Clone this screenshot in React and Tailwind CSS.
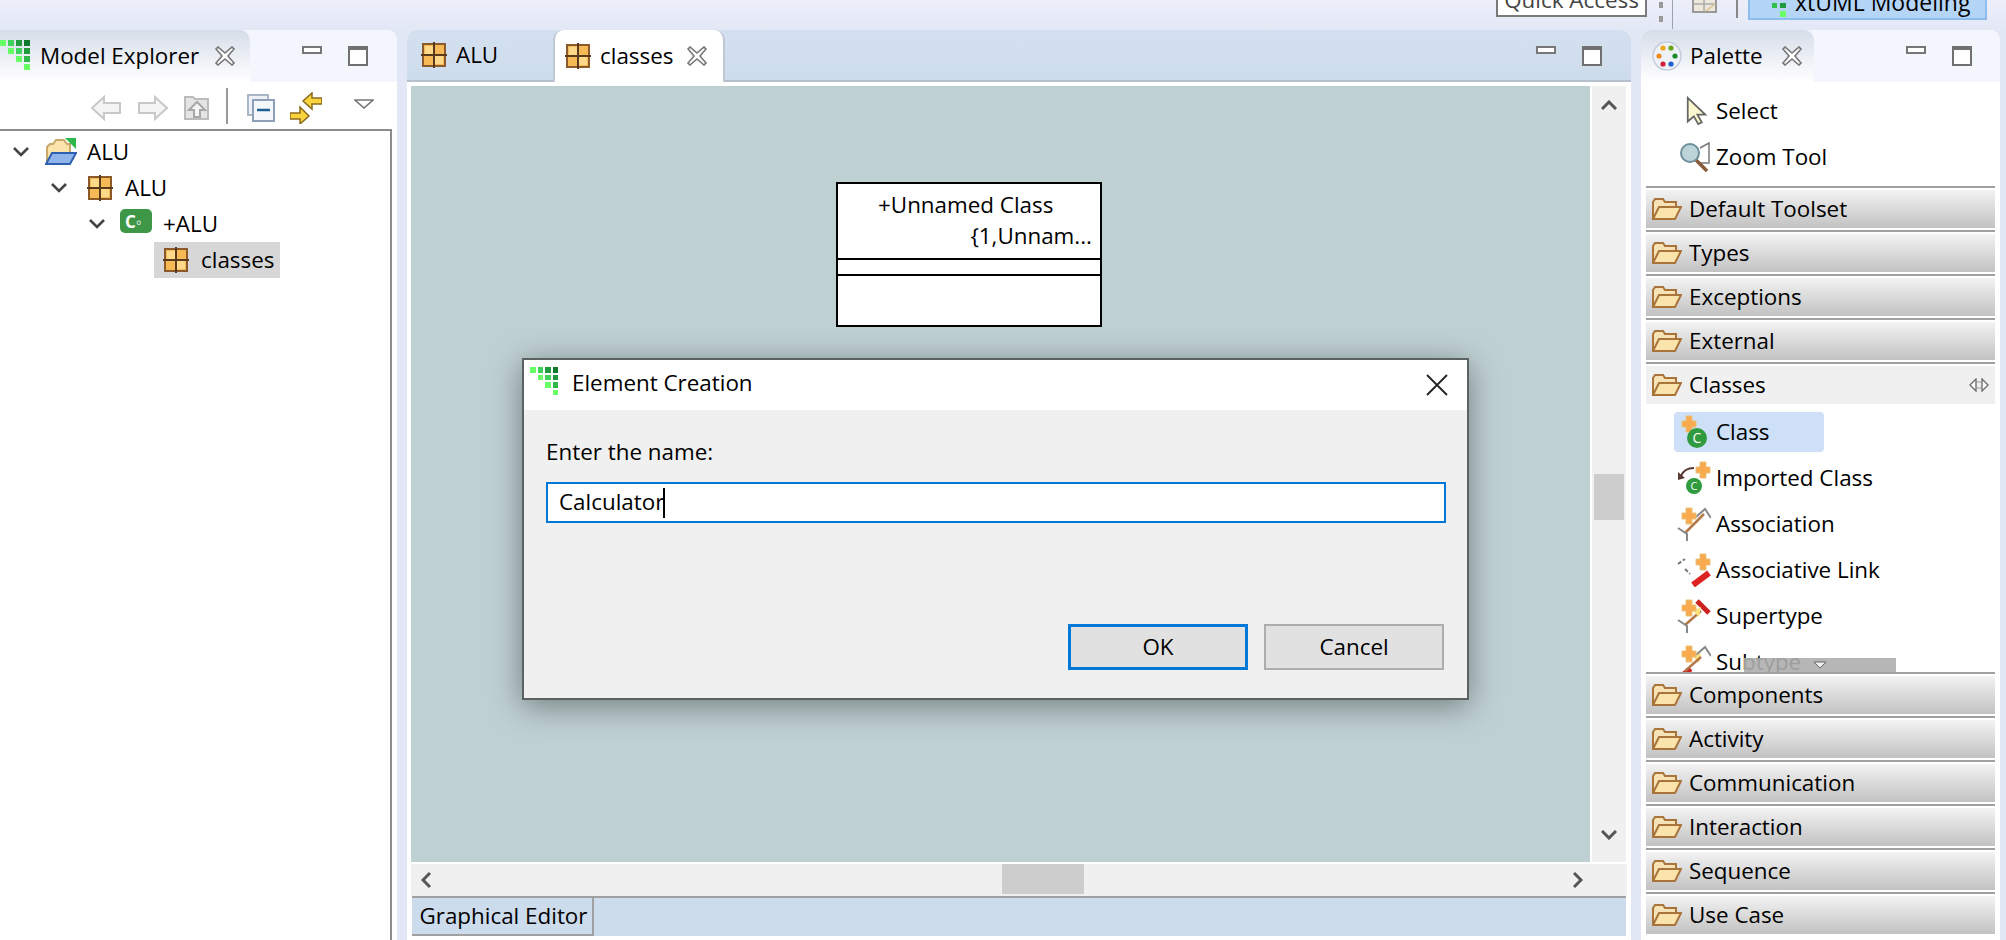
import React from "react";

const Logo = ({ className }) => (
  <svg viewBox="0 0 32 32" className={className} shapeRendering="crispEdges">
    <rect x="0" y="0" width="6" height="6" fill="#66ff66" />
    <rect x="8" y="0" width="6" height="6" fill="#3ed25a" />
    <rect x="16" y="0" width="6" height="6" fill="#1f9a3c" />
    <rect x="24" y="0" width="6" height="6" fill="#0e7a2c" />
    <rect x="8" y="8" width="6" height="6" fill="#66ff66" />
    <rect x="16" y="8" width="6" height="6" fill="#3ed25a" />
    <rect x="24" y="8" width="6" height="6" fill="#1f9a3c" />
    <rect x="16" y="16" width="6" height="6" fill="#66ff66" />
    <rect x="24" y="16" width="6" height="6" fill="#2fb84a" />
    <rect x="24" y="24" width="6" height="6" fill="#66ff66" />
  </svg>
);

const PackageIcon = () => (
  <svg viewBox="0 0 26 26" className="w-[26px] h-[26px] shrink-0">
    <rect x="2" y="2" width="22" height="22" fill="#f7b955" stroke="#8a5a2a" strokeWidth="2" />
    <rect x="4" y="4" width="8" height="8" fill="#ffd98a" />
    <rect x="14" y="14" width="8" height="8" fill="#ffd98a" />
    <path d="M13 0v26M0 13h26" stroke="#5a3a1c" strokeWidth="2" />
  </svg>
);

const CloseIcon = ({ className = "" }) => (
  <svg viewBox="0 0 20 20" className={"w-5 h-5 shrink-0 " + className}>
    <path d="M1 3l2-2 7 6 7-6 2 2-6 7 6 7-2 2-7-6-7 6-2-2 6-7z" fill="#fff" stroke="#777" strokeWidth="1.6" />
  </svg>
);

const MinIcon = () => <div className="w-5 h-[8px] border-2 border-[#777] bg-white" />;
const MaxIcon = () => (
  <div className="w-5 h-5 border-2 border-[#707070] bg-white">
    <div className="h-[2px] bg-[#707070]" />
  </div>
);

const Chevron = () => (
  <svg viewBox="0 0 18 12" className="w-[18px] h-3 shrink-0">
    <path d="M2 2l7 7 7-7" fill="none" stroke="#444" strokeWidth="2.6" />
  </svg>
);

const Folder = () => (
  <svg viewBox="0 0 30 24" className="w-[30px] h-6 shrink-0">
    <path d="M1 22V5l2-3h8l2 3h11v5" fill="#f6e2b4" stroke="#a8743a" strokeWidth="2" />
    <path d="M1 22l6-12h22l-6 12z" fill="#fbe3ac" stroke="#a8743a" strokeWidth="2" />
  </svg>
);

const ProjectFolder = () => (
  <svg viewBox="0 0 32 28" className="w-8 h-7 shrink-0">
    <path d="M2 26V9l3-3h3l3-4h8l3 4h3v8" fill="#fbe3ac" stroke="#c9a86a" strokeWidth="2" />
    <path d="M1 26l6-11h24l-6 11z" fill="#8fb4ea" stroke="#2f5fb0" strokeWidth="2" />
    <path d="M20 0h11v11z" fill="#2fb84a" />
  </svg>
);

const Drawer = ({ name, open }) => (
  <div className="h-11 pt-[2px] pb-[2px] border-t-2 border-[#a0a0a0]">
    <div
      className={
        "h-[38px] flex items-center pl-[6px] gap-[7px] " +
        (open ? "bg-[#f0f0f0]" : "bg-gradient-to-b from-[#f3f3f3] to-[#c2c2c2]")
      }
    >
      <Folder />
      <span className="flex-1">{name}</span>
      {open && (
        <svg viewBox="0 0 20 14" className="w-5 h-[14px] mr-[6px]">
          <path d="M1 7l6-6v12zM19 7l-6-6v12z" fill="#fff" stroke="#777" strokeWidth="1.5" />
          <path d="M8 4h4M8 10h4" stroke="#999" />
        </svg>
      )}
    </div>
  </div>
);

const ToolIcon = ({ kind }) => {
  const plus = <path d="M5 6h4V1h6v5h4v6h-4v5H9v-5H5z" fill="#f9a94e" stroke="#e8c27a" strokeWidth="1" />;
  const fork = <path d="M19 10l9-8 6 9M1 21l9 6 0 7" stroke="#888" strokeWidth="2" fill="none" />;
  return (
    <svg viewBox="0 0 34 34" className="w-[34px] h-[34px] shrink-0">
      {kind === "class" && (
        <>
          {plus}
          <circle cx="20" cy="23" r="10" fill="#2f9a3e" />
          <text x="20" y="28" fontSize="14" textAnchor="middle" fill="#fff" fontFamily="Open Sans">C</text>
        </>
      )}
      {kind === "imported" && (
        <>
          <g transform="translate(14 0)">{plus}</g>
          <path d="M17 7c-6 0-11 3-13 8" fill="none" stroke="#5a3a30" strokeWidth="2" />
          <path d="M1 11l7 6-7 2z" fill="#5a3a30" />
          <circle cx="17" cy="25" r="8" fill="#2f9a3e" />
          <text x="17" y="29" fontSize="11" textAnchor="middle" fill="#fff" fontFamily="Open Sans">C</text>
        </>
      )}
      {kind === "association" && (
        <>
          <path d="M8 26L27 7" stroke="#b5784a" strokeWidth="2.5" />
          {fork}
          {plus}
        </>
      )}
      {kind === "link" && (
        <>
          <path d="M1 11l7-5M8 16l5 5" stroke="#777" strokeWidth="2" strokeDasharray="4 2" />
          <path d="M16 32l16-12" stroke="#d22" strokeWidth="6" />
          <g transform="translate(14 0)">{plus}</g>
        </>
      )}
      {kind === "super" && (
        <>
          <path d="M20 2l12 12" stroke="#c22" strokeWidth="5" />
          <path d="M8 26L24 12" stroke="#b5784a" strokeWidth="2.5" />
          <path d="M24 8l-8 4 6 6z" fill="#fde27a" />
          <path d="M1 21l9 6 0 7" stroke="#888" strokeWidth="2" fill="none" />
          {plus}
        </>
      )}
      {kind === "sub" && (
        <>
          <path d="M2 32l12-8" stroke="#c22" strokeWidth="5" />
          <path d="M19 10l9-8 6 9" stroke="#888" strokeWidth="2" fill="none" />
          <path d="M24 8l-8 4 6 6z" fill="#fde27a" />
          <path d="M8 26L24 12" stroke="#b5784a" strokeWidth="2.5" />
          {plus}
        </>
      )}
    </svg>
  );
};

const Tool = ({ kind, name }) => (
  <div className="h-[46px] flex items-center pl-[31px] gap-[5px]">
    <ToolIcon kind={kind} />
    <span>{name}</span>
  </div>
);

const Row = ({ indent, icon, label, chevron = true, selected, gap, iconMargin = "ml-[15px]" }) => (
  <div className={"h-9 flex items-center " + indent}>
    {chevron ? <Chevron /> : null}
    <div
      className={
        "h-9 flex items-center " + gap + " " + (selected ? "bg-[#d7d7d7] px-[9px] w-[126px]" : iconMargin)
      }
    >
      {icon}
      <span>{label}</span>
    </div>
  </div>
);

export default function App() {
  return (
    <div
      className="relative w-[2006px] h-[940px] overflow-hidden bg-[#e2e7f5] text-[22.4px] leading-none text-black"
      style={{ fontFamily: '"Open Sans", sans-serif' }}
    >
      {/* top toolbar, cut off by the top of the shot */}
      <div className="h-[30px] flex items-start pl-[1496px] bg-gradient-to-b from-[#eceffa] to-[#e3e8f6]">
        <div className="w-[151px] h-[17px] bg-white border-2 border-t-0 border-[#7a7a7a] overflow-hidden flex items-start justify-center">
          <span className="text-[#444] -mt-[11px] whitespace-nowrap">Quick Access</span>
        </div>
        <div className="w-[4px] h-[20px] ml-[12px] mt-[2px] border-y-[6px] border-[#999]" />
        <div className="w-[1px] h-[29px] ml-[9px] bg-[#9aa3b0]" />
        <svg viewBox="0 0 25 13" className="w-[25px] h-[13px] ml-[19px]">
          <path d="M1 0v12h23V0" fill="#ece8dc" stroke="#999" strokeWidth="2" />
          <path d="M1 4h23M12 0v12" stroke="#aaa" strokeWidth="1.5" />
          <path d="M14 11l9-7" stroke="#d9c48a" strokeWidth="1.5" />
        </svg>
        <div className="w-[2px] h-[18px] ml-[19px] bg-[#888]" />
        <div className="w-[239px] h-[20px] ml-[10px] bg-[#b5d5f7] border-2 border-t-0 border-[#8dbdf0] flex items-center overflow-hidden pl-[22px] gap-[7px]">
          <svg viewBox="0 0 16 16" className="w-[16px] h-[16px] shrink-0" shapeRendering="crispEdges">
            <rect x="0" y="2" width="5" height="5" fill="#2fc14a" />
            <rect x="8" y="2" width="6" height="5" fill="#1f9a3c" />
            <rect x="8" y="10" width="6" height="6" fill="#66ff66" />
          </svg>
          <span className="-mt-[14px] text-[23px] whitespace-nowrap">xtUML Modeling</span>
        </div>
      </div>

      <div className="h-[910px] flex">
        {/* Model Explorer */}
        <div className="w-[397px] bg-white rounded-tr-[10px] overflow-hidden flex flex-col">
          <div className="h-[52px] flex bg-[#f4f6fd]">
            <div className="w-[250px] shrink-0 rounded-tr-[10px] bg-gradient-to-b from-[#d6dde9] to-white flex items-center gap-[10px]">
              <Logo className="w-[32px] h-[32px] shrink-0" />
              <span className="-ml-[2px] whitespace-nowrap">Model Explorer</span>
              <CloseIcon className="ml-[6px]" />
            </div>
            <div className="flex items-start pt-[16px] pl-[52px] gap-[26px]">
              <MinIcon />
              <MaxIcon />
            </div>
          </div>
          <div className="h-[47px] flex items-center pl-[91px] pt-[4px]">
            <svg viewBox="0 0 30 26" className="w-[30px] h-[26px]">
              <path d="M1 13L13 2v6h16v10H13v6z" fill="#f4f4f4" stroke="#c8c8c8" strokeWidth="2" />
            </svg>
            <svg viewBox="0 0 30 26" className="w-[30px] h-[26px] ml-[17px]">
              <path d="M29 13L17 2v6H1v10h16v6z" fill="#f4f4f4" stroke="#c8c8c8" strokeWidth="2" />
            </svg>
            <svg viewBox="0 0 26 30" className="w-[26px] h-[30px] ml-[16px]">
              <path d="M1 4h8l2 2h13v20H1z" fill="#e4e4e4" stroke="#bcbcbc" strokeWidth="2" />
              <path d="M13 9l8 8h-5v7h-6v-7H5z" fill="#f5f5f5" stroke="#a8a8a8" strokeWidth="2" />
            </svg>
            <div className="w-[2px] h-[36px] ml-[16px] -mt-[4px] bg-[#999]" />
            <svg viewBox="0 0 28 28" className="w-[28px] h-[28px] ml-[19px]">
              <rect x="1" y="1" width="20" height="20" fill="#eef2f8" stroke="#a9b7c9" strokeWidth="2" />
              <rect x="6" y="6" width="21" height="21" fill="#f4f7fb" stroke="#8ea0b8" strokeWidth="2" />
              <path d="M10 16h13" stroke="#1f5f96" strokeWidth="2.5" />
            </svg>
            <svg viewBox="0 0 32 32" className="w-[32px] h-[32px] ml-[15px]">
              <path d="M13 9l9-8v5h10v6H22v5z" fill="#f8d33c" stroke="#8a6a1c" strokeWidth="1.5" />
              <path d="M19 24l-9-9v6H0v6h10v5z" fill="#f8d33c" stroke="#8a6a1c" strokeWidth="1.5" />
            </svg>
            <svg viewBox="0 0 20 10" className="w-5 h-[10px] ml-[32px] -mt-[8px]">
              <path d="M1 1h18l-9 8z" fill="#fff" stroke="#777" strokeWidth="1.6" />
            </svg>
          </div>
          <div className="w-[392px] flex-1 border-t-2 border-r-2 border-[#8c8c8c] pt-[3px]">
            <Row indent="pl-[12px]" icon={<ProjectFolder />} label="ALU" gap="gap-[10px]" />
            <Row indent="pl-[50px]" icon={<PackageIcon />} label="ALU" gap="gap-[12px]" iconMargin="ml-[19px]" />
            <Row
              indent="pl-[88px]"
              icon={
                <div className="w-[32px] h-[24px] -mt-[6px] rounded-[5px] bg-[#3e9647] text-white text-[17px] font-bold flex items-center pl-[5px]">
                  C◦
                </div>
              }
              label="+ALU"
              gap="gap-[11px]"
              iconMargin="ml-[14px]"
            />
            <Row indent="pl-[154px]" icon={<PackageIcon />} label="classes" chevron={false} selected gap="gap-[12px]" />
          </div>
        </div>

        {/* Editor */}
        <div className="w-[1224px] ml-[10px] bg-white rounded-t-[10px] overflow-hidden flex flex-col">
          <div className="h-[52px] flex border-b-2 border-[#b6bfcc] bg-gradient-to-b from-[#d4e0ef] to-[#cddcec]">
            <div className="w-[146px] flex items-center pl-[14px] gap-[9px]">
              <PackageIcon />
              <span>ALU</span>
            </div>
            <div className="w-[172px] h-[52px] bg-white rounded-t-[10px] border-x-2 border-[#c0c8d4] flex items-center pl-[10px] gap-[9px]">
              <PackageIcon />
              <span>classes</span>
              <CloseIcon className="ml-[5px]" />
            </div>
            <div className="flex-1 flex items-start justify-end pt-[16px] pr-[29px] gap-[26px]">
              <MinIcon />
              <MaxIcon />
            </div>
          </div>
          <div className="flex pt-[4px] pl-[4px] pr-[5px]">
            <div className="relative w-[1181px] bg-[#bfd0d3] h-[776px]">
              <div className="absolute left-[425px] top-[96px] w-[266px] h-[145px] bg-white border-2 border-black">
                <div className="h-[74px] relative">
                  <div className="absolute left-[40px] top-[10px] whitespace-nowrap">+Unnamed Class</div>
                  <div className="absolute right-[8px] top-[41px] whitespace-nowrap">{"{1,Unnam..."}</div>
                </div>
                <div className="h-[18px] border-y-2 border-black" />
              </div>
            </div>
            <div className="w-[34px] ml-[2px] h-[776px] bg-[#f0f0f0] flex flex-col items-center">
              <svg viewBox="0 0 16 10" className="w-4 h-[10px] mt-[14px]">
                <path d="M1 9l7-7 7 7" fill="none" stroke="#555" strokeWidth="3" />
              </svg>
              <div className="w-[30px] h-[46px] mt-[364px] bg-[#cdcdcd]" />
              <svg viewBox="0 0 16 10" className="w-4 h-[10px] mt-[310px]">
                <path d="M1 1l7 7 7-7" fill="none" stroke="#555" strokeWidth="3" />
              </svg>
            </div>
          </div>
          <div className="h-[32px] mt-[2px] mx-[4px] bg-[#f0f0f0] flex items-center">
            <svg viewBox="0 0 10 16" className="w-[10px] h-4 ml-[10px]">
              <path d="M9 1L2 8l7 7" fill="none" stroke="#555" strokeWidth="3" />
            </svg>
            <div className="w-[82px] h-[30px] ml-[571px] -mt-[2px] bg-[#cdcdcd]" />
            <svg viewBox="0 0 10 16" className="w-[10px] h-4 ml-[489px]">
              <path d="M1 1l7 7-7 7" fill="none" stroke="#555" strokeWidth="3" />
            </svg>
          </div>
          <div className="h-[40px] mx-[5px] bg-[#cddcec] border-t-2 border-[#a0a0a0] flex">
            <div className="w-[182px] h-[38px] pl-[3px] border-r-2 border-b-2 border-[#a0a0a0] flex items-center justify-center whitespace-nowrap">
              Graphical Editor
            </div>
          </div>
        </div>

        {/* Palette */}
        <div className="w-[359px] ml-[10px] bg-white rounded-t-[10px] overflow-hidden flex flex-col">
          <div className="h-[52px] flex bg-[#f4f6fd]">
            <div className="w-[173px] shrink-0 rounded-tr-[10px] bg-gradient-to-b from-[#d6dde9] to-white flex items-center pl-[11px] gap-[8px]">
              <svg viewBox="0 0 30 30" className="w-[30px] h-[30px] shrink-0">
                <circle cx="15" cy="15" r="14" fill="#eef1f6" stroke="#c6cede" strokeWidth="1.5" />
                <circle cx="11" cy="7" r="2.6" fill="#f2a81c" />
                <circle cx="19" cy="7" r="2.6" fill="#6aa51c" />
                <circle cx="7" cy="15" r="2.6" fill="#f08a1c" />
                <circle cx="23" cy="15" r="2.6" fill="#1f8a2c" />
                <circle cx="11" cy="23" r="2.6" fill="#d0203a" />
                <circle cx="19" cy="23" r="2.6" fill="#1f5fd0" />
              </svg>
              <span>Palette</span>
              <CloseIcon className="ml-[11px]" />
            </div>
            <div className="flex items-start pt-[16px] pl-[92px] gap-[26px]">
              <MinIcon />
              <MaxIcon />
            </div>
          </div>
          <div className="flex flex-col pt-[6px] pl-[39px] h-[104px] shrink-0">
            <div className="h-[46px] flex items-center gap-[9px] pl-[6px]">
              <svg viewBox="0 0 24 34" className="w-[21px] h-[32px] shrink-0">
                <path d="M2 2v27l7-6 5 9 4-2-5-9h9z" fill="#fbf8cf" stroke="#666" strokeWidth="2" />
              </svg>
              <span>Select</span>
            </div>
            <div className="h-[46px] flex items-center gap-[6px]">
              <svg viewBox="0 0 30 30" className="w-[30px] h-[30px] shrink-0">
                <path d="M20 6l9-5v20H20" fill="#fff" stroke="#777" strokeWidth="1.5" />
                <path d="M16 18l11 11" stroke="#8a5a3a" strokeWidth="3.5" />
                <circle cx="10" cy="11" r="9" fill="#bcd3d8" stroke="#6c8f9a" strokeWidth="2" />
              </svg>
              <span>Zoom Tool</span>
            </div>
          </div>
          <div className="mx-[5px]">
            <Drawer name="Default Toolset" />
            <Drawer name="Types" />
            <Drawer name="Exceptions" />
            <Drawer name="External" />
            <Drawer name="Classes" open />
            <div className="relative h-[266px] pt-[6px] overflow-hidden">
              <div className="h-[40px] w-[150px] ml-[28px] rounded-[4px] bg-[#cde0f8] flex items-center pl-[3px] gap-[5px]">
                <ToolIcon kind="class" />
                <span>Class</span>
              </div>
              <div className="pt-[3px]">
                <Tool kind="imported" name="Imported Class" />
                <Tool kind="association" name="Association" />
                <Tool kind="link" name="Associative Link" />
                <Tool kind="super" name="Supertype" />
                <Tool kind="sub" name="Subtype" />
              </div>
              <div className="absolute left-[98px] bottom-0 w-[152px] h-[14px] bg-[#aeaeae]/90 flex items-center justify-center">
                <svg viewBox="0 0 14 8" className="w-[14px] h-2">
                  <path d="M1 1h12l-6 6z" fill="#f0f0f0" stroke="#666" />
                </svg>
              </div>
            </div>
            <Drawer name="Components" />
            <Drawer name="Activity" />
            <Drawer name="Communication" />
            <Drawer name="Interaction" />
            <Drawer name="Sequence" />
            <Drawer name="Use Case" />
          </div>
        </div>
      </div>

      {/* Element Creation dialog */}
      <div className="absolute left-[522px] top-[358px] w-[947px] h-[342px] border-2 border-[#5c6262] bg-[#f0f0f0] shadow-[0_6px_30px_rgba(0,0,0,0.4)] flex flex-col">
        <div className="h-[50px] bg-white flex items-center pl-[6px] gap-[12px]">
          <Logo className="w-[30px] h-[30px] -mt-[6px]" />
          <span className="flex-1 -mt-[4px]">Element Creation</span>
          <svg viewBox="0 0 22 22" className="w-[22px] h-[22px] mr-[19px]">
            <path d="M1 1l20 20M21 1L1 21" stroke="#222" strokeWidth="1.8" />
          </svg>
        </div>
        <div className="flex-1 px-[22px] pt-[31px]">
          <div className="h-[20px]">Enter the name:</div>
          <div className="h-[41px] w-[900px] mt-[21px] bg-white border-2 border-[#0078d7] flex items-center pl-[11px]">
            <span>Calculator</span>
            <div className="w-[2px] h-[30px] -ml-[1px] bg-black" />
          </div>
          <div className="flex justify-end gap-[16px] mt-[101px] pr-[1px]">
            <div className="w-[180px] h-[46px] bg-[#e1e1e1] border-[3px] border-[#0078d7] flex items-center justify-center">OK</div>
            <div className="w-[180px] h-[46px] bg-[#e1e1e1] border-2 border-[#adadad] flex items-center justify-center">Cancel</div>
          </div>
        </div>
      </div>
    </div>
  );
}
